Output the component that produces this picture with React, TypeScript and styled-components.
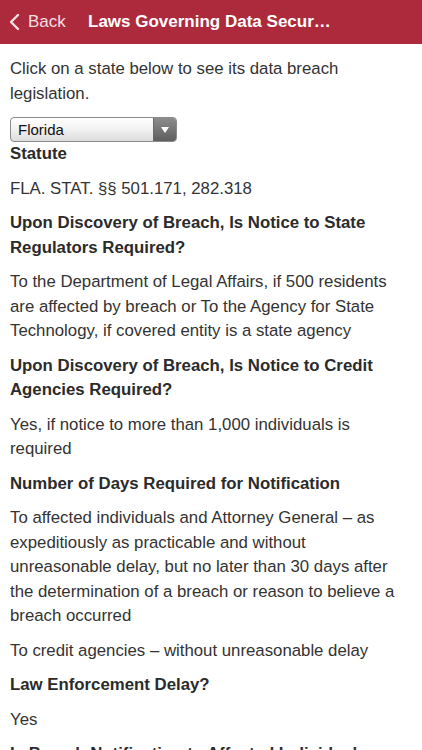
import React from 'react';
import styled, { createGlobalStyle } from 'styled-components';

const GlobalStyle = createGlobalStyle`
  html, body {
    margin: 0;
    padding: 0;
    background: #ffffff;
  }
  body {
    font-family: "Liberation Sans", Arial, sans-serif;
    -webkit-font-smoothing: antialiased;
  }
`;

const Page = styled.div`
  width: 422px;
  height: 750px;
  overflow: hidden;
  background: #ffffff;
`;

const NavBar = styled.div`
  height: 44px;
  background: #ad2a3c;
  display: grid;
  grid-template-columns: 88px 1fr 88px;
  align-items: center;
`;

const BackButton = styled.div`
  display: flex;
  align-items: center;
  gap: 8px;
  padding-left: 9px;
  color: #f6dfe2;
  font-size: 17px;
`;

const Title = styled.div`
  color: #ffffff;
  font-size: 17px;
  font-weight: bold;
  text-align: center;
  white-space: nowrap;
  overflow: hidden;
  text-overflow: ellipsis;
`;

const Content = styled.div`
  padding: 13px 10px 0 10px;
  color: #333333;
  font-size: 16.8px;
  line-height: 24.5px;
`;

const Intro = styled.p`
  margin: 0 0 11px 0;
`;

const SelectBox = styled.div`
  width: 165px;
  height: 23px;
  border: 1px solid #8a8a8a;
  border-radius: 4px;
  background: linear-gradient(#ffffff 0%, #f1f1f1 50%, #dcdcdc 100%);
  display: flex;
  align-items: stretch;
  overflow: hidden;
  box-sizing: content-box;
`;

const SelectLabel = styled.div`
  flex: 1;
  padding-left: 7px;
  font-size: 15px;
  line-height: 23px;
  color: #111111;
`;

const SelectArrow = styled.div`
  width: 22px;
  background: linear-gradient(#8c8c8c 0%, #5e5e5e 100%);
  border-left: 1px solid #6a6a6a;
  display: flex;
  align-items: center;
  justify-content: center;
`;

const Heading = styled.h3`
  margin: 0 0 10px 0;
  font-size: 16.8px;
  font-weight: bold;
  line-height: 24.5px;
  color: #2b2b2b;
`;

const Body = styled.p`
  margin: 0 0 10px 0;
`;

const sections: { heading: string; body: string[] }[] = [
  {
    heading: 'Upon Discovery of Breach, Is Notice to State Regulators Required?',
    body: [
      'To the Department of Legal Affairs, if 500 residents are affected by breach or To the Agency for State Technology, if covered entity is a state agency',
    ],
  },
  {
    heading: 'Upon Discovery of Breach, Is Notice to Credit Agencies Required?',
    body: ['Yes, if notice to more than 1,000 individuals is required'],
  },
  {
    heading: 'Number of Days Required for Notification',
    body: [
      'To affected individuals and Attorney General \u2013 as expeditiously as practicable and without unreasonable delay, but no later than 30 days after the determination of a breach or reason to believe a breach occurred',
      'To credit agencies \u2013 without unreasonable delay',
    ],
  },
  {
    heading: 'Law Enforcement Delay?',
    body: ['Yes'],
  },
  {
    heading: 'Is Breach Notification to Affected Individuals Required?',
    body: ['Yes'],
  },
];

export default function App() {
  return (
    <Page>
      <GlobalStyle />
      <NavBar>
        <BackButton>
          <svg width="11" height="18" viewBox="0 0 11 18">
            <path d="M9 2 L2 9 L9 16" fill="none" stroke="#f6dfe2" strokeWidth="2.4" strokeLinecap="round" strokeLinejoin="round" />
          </svg>
          Back
        </BackButton>
        <Title>Laws Governing Data Security and Breach Notification</Title>
        <div />
      </NavBar>
      <Content>
        <Intro>Click on a state below to see its data breach legislation.</Intro>
        <SelectBox>
          <SelectLabel>Florida</SelectLabel>
          <SelectArrow>
            <svg width="8" height="6" viewBox="0 0 8 6">
              <path d="M0 0 L8 0 L4 6 Z" fill="#ffffff" />
            </svg>
          </SelectArrow>
        </SelectBox>
        <Heading>Statute</Heading>
        <Body>FLA. STAT. §§ 501.171, 282.318</Body>
        {sections.map((s) => (
          <React.Fragment key={s.heading}>
            <Heading>{s.heading}</Heading>
            {s.body.map((b) => (
              <Body key={b}>{b}</Body>
            ))}
          </React.Fragment>
        ))}
      </Content>
    </Page>
  );
}
